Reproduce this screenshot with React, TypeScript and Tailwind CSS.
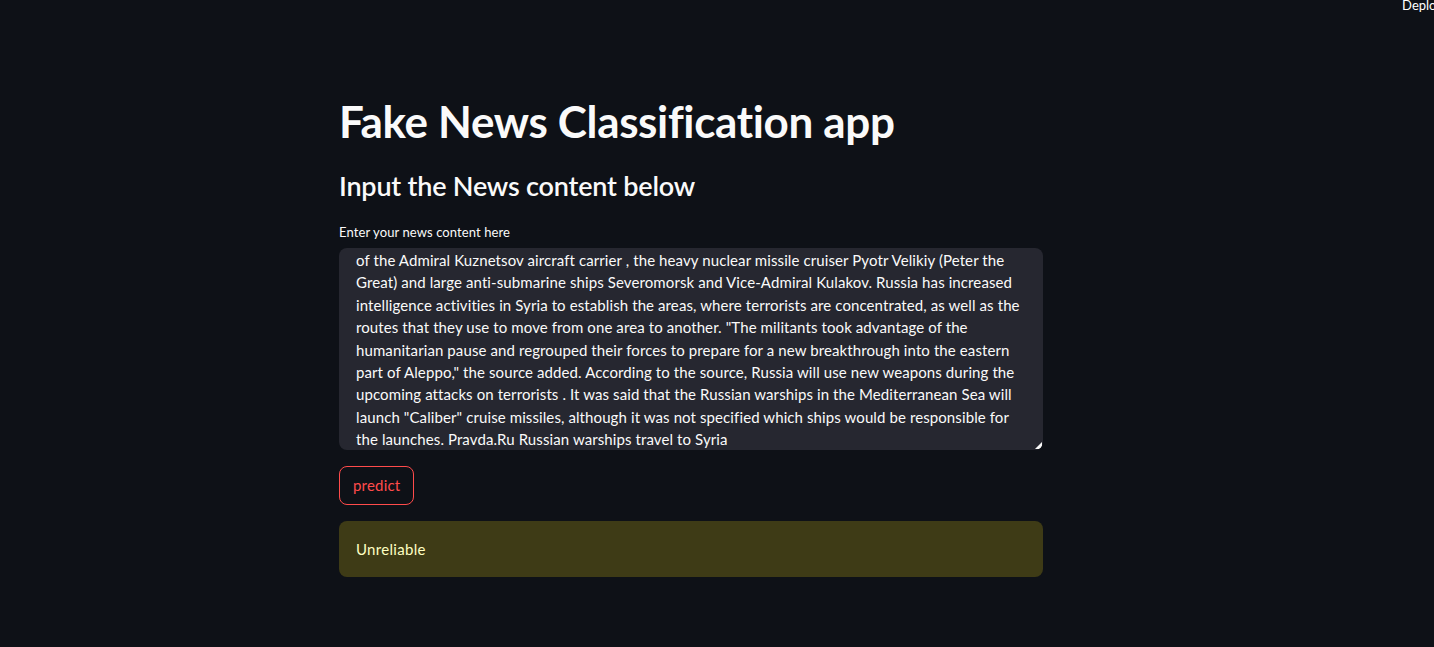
const lines = [
  'of the Admiral Kuznetsov aircraft carrier , the heavy nuclear missile cruiser Pyotr Velikiy (Peter the',
  'Great) and large anti-submarine ships Severomorsk and Vice-Admiral Kulakov. Russia has increased',
  'intelligence activities in Syria to establish the areas, where terrorists are concentrated, as well as the',
  'routes that they use to move from one area to another. "The militants took advantage of the',
  'humanitarian pause and regrouped their forces to prepare for a new breakthrough into the eastern',
  'part of Aleppo," the source added. According to the source, Russia will use new weapons during the',
  'upcoming attacks on terrorists . It was said that the Russian warships in the Mediterranean Sea will',
  'launch "Caliber" cruise missiles, although it was not specified which ships would be responsible for',
  'the launches. Pravda.Ru Russian warships travel to Syria',
]

export default function App() {
  return (
    <div
      className="min-h-[647px] w-full overflow-hidden bg-[#0e1117] text-[#fafafa]"
      style={{ fontFamily: 'Lato, "Open Sans", sans-serif' }}
    >
      <div className="flex h-[10px] justify-end overflow-visible">
        <span className="mr-[-9px] text-[13px] leading-[10px] text-white">Deploy</span>
      </div>

      <main className="ml-[339px] w-[704px] pt-[82px]">
        <h1 className="text-[44px] font-bold leading-[58px] tracking-[-0.35px]">
          Fake News Classification app
        </h1>

        <h2 className="mt-[18px] text-[27px] font-semibold leading-[36px] tracking-[-0.2px]">
          Input the News content below
        </h2>

        <label className="mt-[19px] block text-[13px] leading-[18px] tracking-[0.1px]">
          Enter your news content here
        </label>

        <div className="relative mt-[7px] h-[202px] overflow-hidden rounded-lg bg-[#262730] pl-[17px] pr-4">
          <div className="mt-[1px] text-[15px] leading-[22.4px] tracking-[0.1px]">
            {lines.map((l, i) => (
              <div key={i} className="whitespace-nowrap">
                {l}
              </div>
            ))}
          </div>
          <svg className="absolute bottom-[1px] right-[1px]" width="7" height="7" viewBox="0 0 7 7">
            <path d="M7 0 L7 7 L0 7 Z" fill="#fafafa" />
          </svg>
        </div>

        <button className="mt-4 h-[39px] rounded-lg border border-[#ff4b4b] px-[13px] text-[15px] tracking-[0.2px] text-[#ff4b4b]">
          predict
        </button>

        <div className="mt-4 flex h-[56px] items-center rounded-lg bg-[#3e3b16] pl-[17px] pr-4 text-[15px] tracking-[0.3px] text-[#ffffc2]">
          Unreliable
        </div>
      </main>
    </div>
  )
}
